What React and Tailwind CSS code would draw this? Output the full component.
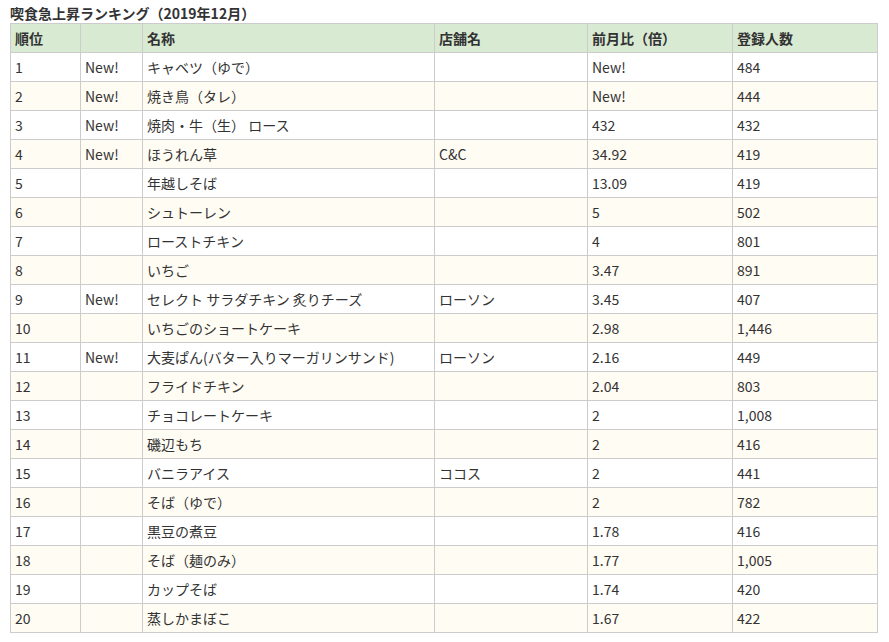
const rows = [
  ["1", "New!", "キャベツ（ゆで）", "", "New!", "484"],
  ["2", "New!", "焼き鳥（タレ）", "", "New!", "444"],
  ["3", "New!", "焼肉・牛（生） ロース", "", "432", "432"],
  ["4", "New!", "ほうれん草", "C&C", "34.92", "419"],
  ["5", "", "年越しそば", "", "13.09", "419"],
  ["6", "", "シュトーレン", "", "5", "502"],
  ["7", "", "ローストチキン", "", "4", "801"],
  ["8", "", "いちご", "", "3.47", "891"],
  ["9", "New!", "セレクト サラダチキン 炙りチーズ", "ローソン", "3.45", "407"],
  ["10", "", "いちごのショートケーキ", "", "2.98", "1,446"],
  ["11", "New!", "大麦ぱん(バター入りマーガリンサンド)", "ローソン", "2.16", "449"],
  ["12", "", "フライドチキン", "", "2.04", "803"],
  ["13", "", "チョコレートケーキ", "", "2", "1,008"],
  ["14", "", "磯辺もち", "", "2", "416"],
  ["15", "", "バニラアイス", "ココス", "2", "441"],
  ["16", "", "そば（ゆで）", "", "2", "782"],
  ["17", "", "黒豆の煮豆", "", "1.78", "416"],
  ["18", "", "そば（麺のみ）", "", "1.77", "1,005"],
  ["19", "", "カップそば", "", "1.74", "420"],
  ["20", "", "蒸しかまぼこ", "", "1.67", "422"],
];

const headers = ["順位", "", "名称", "店舗名", "前月比（倍）", "登録人数"];
const widths = ["w-[70px]", "w-[62px]", "w-[292px]", "w-[153px]", "w-[145px]", "w-[145px]"];

export default function App() {
  return (
    <div
      className="bg-white text-[#333] pl-[10px] pt-[3px]"
      style={{ fontFamily: '"Noto Sans CJK JP", "Noto Sans", sans-serif' }}
    >
      <div className="text-[14px] font-bold leading-[20px] h-[20px]">喫食急上昇ランキング（2019年12月）</div>
      <table className="border-collapse table-fixed w-[867px] text-[14px]">
        <colgroup>
          {widths.map((w, i) => (
            <col key={i} className={w} />
          ))}
        </colgroup>
        <thead>
          <tr className="bg-[#d9ead3]">
            {headers.map((h, i) => (
              <th
                key={i}
                className="border border-[#cccccc] h-[29px] px-[4px] text-left font-bold leading-[20px] p-0"
              >
                {h}
              </th>
            ))}
          </tr>
        </thead>
        <tbody>
          {rows.map((r, ri) => (
            <tr key={ri} className={ri % 2 === 1 ? "bg-[#fffcf4]" : "bg-white"}>
              {r.map((c, ci) => (
                <td
                  key={ci}
                  className="border border-[#cccccc] h-[29px] px-[4px] p-0 leading-[20px] whitespace-nowrap"
                >
                  {c}
                </td>
              ))}
            </tr>
          ))}
        </tbody>
      </table>
    </div>
  );
}
